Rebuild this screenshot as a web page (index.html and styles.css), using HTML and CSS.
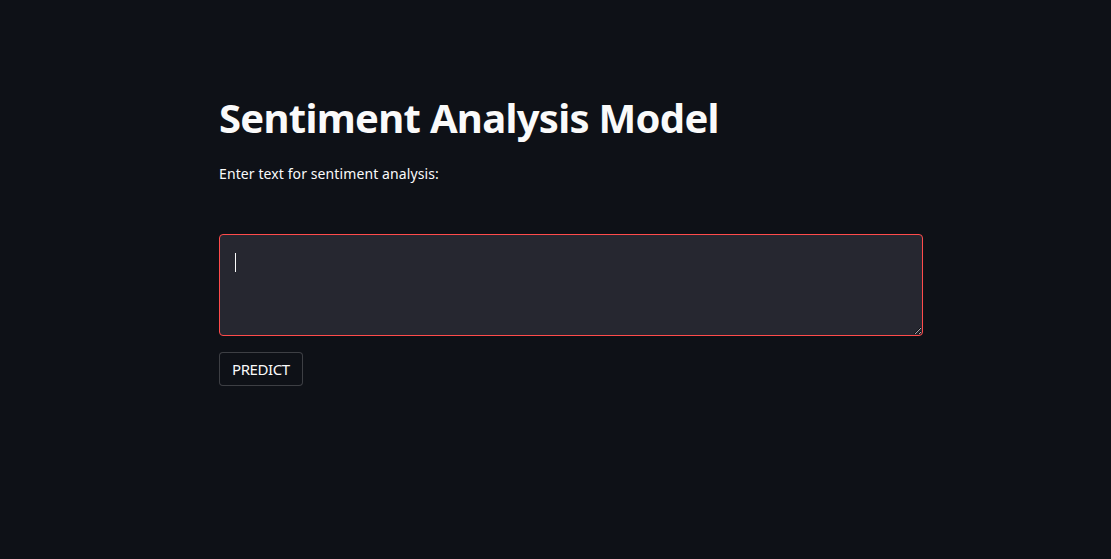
FILE: index.html
```html
<!DOCTYPE html>
<html>
<head>
<meta charset="utf-8">
<link rel="stylesheet" href="styles.css">
</head>
<body>
<main class="app">
  <h1 class="title">Sentiment Analysis Model</h1>
  <label class="label" for="txt">Enter text for sentiment analysis:</label>
  <div class="field">
    <textarea id="txt" class="input" autofocus></textarea>
    <span class="caret"></span>
  </div>
  <button class="btn">PREDICT</button>
</main>
</body>
</html>
```
FILE: styles.css
```css
html, body {
  margin: 0;
  padding: 0;
  background: #0e1117;
  height: 100%;
}
body {
  font-family: "Source Sans Pro", "Noto Sans", "Open Sans", sans-serif;
  color: #fafafa;
}
.app {
  width: 704px;
  margin-left: 219px;
  padding-top: 92px;
  display: flex;
  flex-direction: column;
  align-items: flex-start;
}
.title {
  margin: 0;
  font-size: 40px;
  font-weight: 700;
  line-height: 52px;
  letter-spacing: -0.7px;
}
.label {
  margin-top: 21px;
  font-size: 14px;
  line-height: 18px;
  letter-spacing: 0.1px;
}
.field {
  position: relative;
  margin-top: 51px;
  width: 704px;
}
.input {
  display: block;
  box-sizing: border-box;
  width: 704px;
  height: 102px;
  background: #262730;
  border: 1px solid #ff4b4b;
  border-radius: 4px;
  outline: none;
  color: #fafafa;
  caret-color: transparent;
  padding: 16px;
  font-family: inherit;
  font-size: 16px;
}
.caret {
  position: absolute;
  left: 16px;
  top: 19px;
  width: 1px;
  height: 19px;
  background: #fafafa;
}
.btn {
  margin-top: 16px;
  height: 34px;
  padding: 0 12px;
  background: #0e1117;
  border: 1px solid rgba(250, 250, 250, 0.2);
  border-radius: 4px;
  color: #fafafa;
  font-family: inherit;
  font-size: 15px;
  letter-spacing: -0.4px;
}
```
